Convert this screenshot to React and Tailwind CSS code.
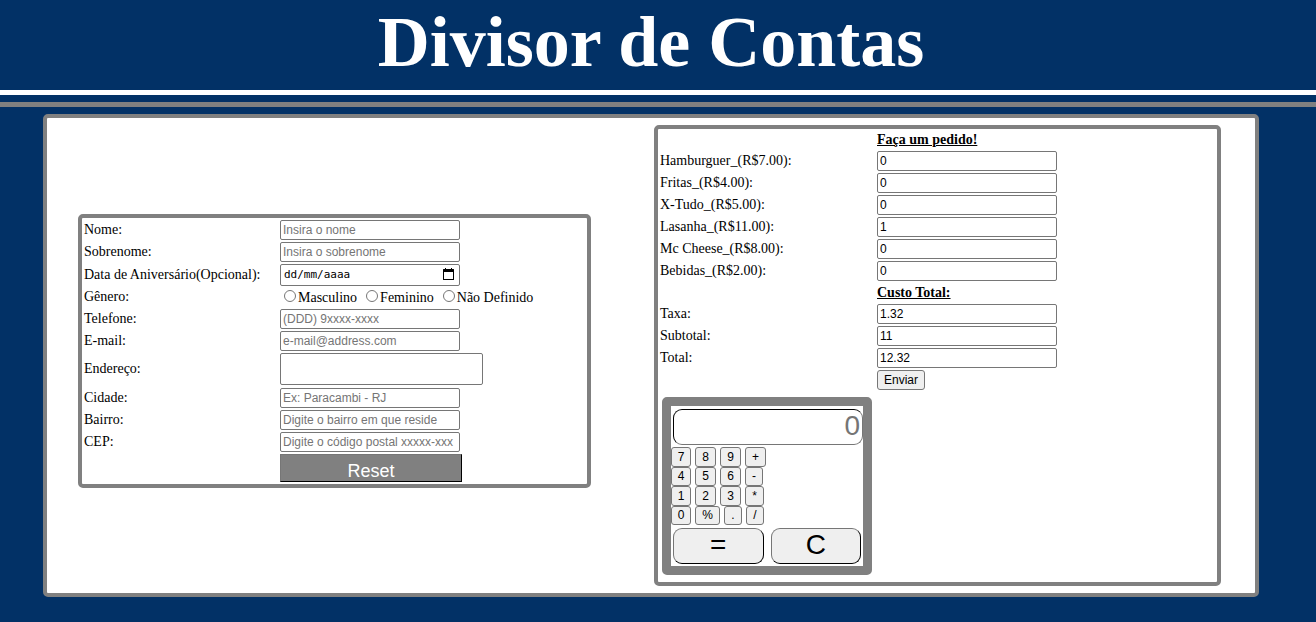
import { useState } from "react";

const FIELD =
  "h-5 w-[180px] rounded-[2px] border border-[#767676] bg-white px-[2px] font-['Liberation_Sans',Arial,sans-serif] text-[12px] leading-4 text-black placeholder:text-[#757575]";
const ROW = "grid grid-cols-[196px_1fr] items-center";
const ORDER_ROW = "grid grid-cols-[217px_1fr] items-center";
const KEY = "rounded-[3px] border border-[#767676] bg-[#efefef] text-center leading-none";
const BIG_KEY =
  "h-9 flex-1 rounded-[9px] border border-t-[#767676] border-l-[#767676] border-r-black border-b-black bg-[#efefef] pb-[3px] text-[28px] leading-none";

const MENU = [
  { id: "hamburguer", label: "Hamburguer_(R$7.00):", price: 7 },
  { id: "fritas", label: "Fritas_(R$4.00):", price: 4 },
  { id: "xtudo", label: "X-Tudo_(R$5.00):", price: 5 },
  { id: "lasanha", label: "Lasanha_(R$11.00):", price: 11 },
  { id: "mccheese", label: "Mc Cheese_(R$8.00):", price: 8 },
  { id: "bebidas", label: "Bebidas_(R$2.00):", price: 2 },
];

const KEYS = [
  [["7", "w-5"], ["8", "w-[21px]"], ["9", "w-[21px]"], ["+", "w-[21px]"]],
  [["4", "w-5"], ["5", "w-[21px]"], ["6", "w-[21px]"], ["-", "w-[18px]"]],
  [["1", "w-5"], ["2", "w-[21px]"], ["3", "w-[21px]"], ["*", "w-[19px]"]],
  [["0", "w-5"], ["%", "w-[25px]"], [".", "w-[18px]"], ["/", "w-[18px]"]],
];

const OPERATIONS = {
  "+": (a, b) => a + b,
  "-": (a, b) => a - b,
  "*": (a, b) => a * b,
  "/": (a, b) => a / b,
  "%": (a, b) => a % b,
};

function evaluate(expression) {
  const tokens = expression.match(/\d*\.?\d+|[-+*/%]/g) || [];
  let result = Number(tokens[0]);
  for (let i = 1; i + 1 < tokens.length; i += 2) {
    const operation = OPERATIONS[tokens[i]];
    if (!operation) return "";
    result = operation(result, Number(tokens[i + 1]));
  }
  return Number.isFinite(result) ? String(result) : "";
}

function TextRow({ id, label, type = "text", placeholder }) {
  return (
    <div className={ROW}>
      <label htmlFor={id}>{label}</label>
      <input id={id} type={type} placeholder={placeholder} className={FIELD} />
    </div>
  );
}

function CustomerForm() {
  return (
    <form className="mb-[10px] flex flex-col gap-[2px] rounded-[5px] border-4 border-[#808080] p-[2px]">
      <TextRow id="nome" label="Nome:" placeholder="Insira o nome" />
      <TextRow id="sobrenome" label="Sobrenome:" placeholder="Insira o sobrenome" />
      <div className={ROW}>
        <label htmlFor="aniversario">Data de Aniversário(Opcional):</label>
        <div className="flex h-[22px] w-[180px] items-center rounded-[2px] border border-[#767676] pr-1 pl-[3px]">
          <input
            id="aniversario"
            type="text"
            placeholder="dd/mm/aaaa"
            className="min-w-0 flex-1 bg-transparent font-['DejaVu_Sans_Mono',monospace] text-[11px] leading-4 outline-none placeholder:text-black"
          />
          <button type="button" aria-label="Abrir calendário">
            <svg width="13" height="13" viewBox="0 0 13 13" className="block">
              <path
                d="M1.5 1H3V0h1v1h5V0h1v1h1.5q.5 0 .5.5v10q0 .5-.5.5h-10q-.5 0-.5-.5v-10q0-.5.5-.5zM2 4v7h9V4z"
                fill="#000"
                fillRule="evenodd"
              />
            </svg>
          </button>
        </div>
      </div>
      <div className={ROW} role="radiogroup" aria-labelledby="genero">
        <span id="genero">Gênero:</span>
        <div className="flex h-[19px] items-center gap-[9px] pl-1">
          {["Masculino", "Feminino", "Não Definido"].map((option) => (
            <label key={option} className="flex items-center gap-[2px]">
              <input type="radio" name="genero" value={option} className="mb-[3px] size-3" />
              <span className="pt-[2px]">{option}</span>
            </label>
          ))}
        </div>
      </div>
      <TextRow id="telefone" label="Telefone:" type="tel" placeholder="(DDD) 9xxxx-xxxx" />
      <TextRow id="email" label="E-mail:" type="email" placeholder="e-mail@address.com" />
      <div className={ROW}>
        <label htmlFor="endereco">Endereço:</label>
        <textarea
          id="endereco"
          className="mb-px block h-8 w-[203px] resize-none rounded-[2px] border border-[#767676] p-[2px] font-['Liberation_Mono',monospace] text-[12px]"
        />
      </div>
      <TextRow id="cidade" label="Cidade:" placeholder="Ex: Paracambi - RJ" />
      <TextRow id="bairro" label="Bairro:" placeholder="Digite o bairro em que reside" />
      <TextRow id="cep" label="CEP:" placeholder="Digite o código postal xxxxx-xxx" />
      <div className="pl-[196px]">
        <button
          type="reset"
          className="block h-7 w-[182px] border border-t-[#767676] border-l-[#767676] border-r-black border-b-black bg-[#808080] pt-[6px] font-['Liberation_Sans',Arial,sans-serif] text-[18px] leading-none text-white"
        >
          Reset
        </button>
      </div>
    </form>
  );
}

function Calculator() {
  const [display, setDisplay] = useState("");
  return (
    <div className="m-1 mt-[5px] mb-[7px] w-[210px] rounded-[5px] border-[9px] border-[#808080] pb-[2px] font-['Liberation_Sans',Arial,sans-serif]">
      <input
        type="text"
        aria-label="Visor da calculadora"
        placeholder="0"
        readOnly
        value={display}
        className="mt-[3px] ml-[2px] block h-9 w-[190px] rounded-[9px] border border-t-black border-r-[#767676] border-b-[#767676] border-l-black px-[2px] pb-[3px] text-right text-[28px] leading-none placeholder:text-[#757575]"
      />
      <div className="mt-[2px] grid h-[78px] grid-rows-4 text-[12px]">
        {KEYS.map((row) => (
          <div key={row[0][0]} className="flex gap-1">
            {row.map(([symbol, width]) => (
              <button
                key={symbol}
                type="button"
                onClick={() => setDisplay(display + symbol)}
                className={`${KEY} ${width}`}
              >
                {symbol}
              </button>
            ))}
          </div>
        ))}
      </div>
      <div className="mt-[3px] flex gap-[7px] px-[2px]">
        <button type="button" className={BIG_KEY} onClick={() => setDisplay(evaluate(display))}>
          =
        </button>
        <button type="button" className={BIG_KEY} onClick={() => setDisplay("")}>
          C
        </button>
      </div>
    </div>
  );
}

function OrderPanel() {
  const [quantities, setQuantities] = useState({ lasanha: "1" });
  const subtotal = MENU.reduce(
    (sum, item) => sum + item.price * Number(quantities[item.id] ?? 0),
    0
  );
  const fee = Math.round(subtotal * 12) / 100;
  const totals = [
    { id: "taxa", label: "Taxa:", value: fee },
    { id: "subtotal", label: "Subtotal:", value: subtotal },
    { id: "total", label: "Total:", value: Math.round((subtotal + fee) * 100) / 100 },
  ];

  return (
    <section className="rounded-[5px] border-4 border-[#808080]">
      <form className="flex flex-col gap-[2px] p-[2px]" onSubmit={(e) => e.preventDefault()}>
        <h2 className="h-[18px] pl-[217px] leading-[18px] font-bold underline">Faça um pedido!</h2>
        {MENU.map((item) => (
          <div key={item.id} className={ORDER_ROW}>
            <label htmlFor={item.id}>{item.label}</label>
            <input
              id={item.id}
              type="text"
              inputMode="numeric"
              value={quantities[item.id] ?? "0"}
              onChange={(e) =>
                setQuantities({ ...quantities, [item.id]: e.target.value.replace(/\D/g, "") })
              }
              className={FIELD}
            />
          </div>
        ))}
        <h2 className="h-[19px] pl-[217px] leading-[19px] font-bold underline">Custo Total:</h2>
        {totals.map((total) => (
          <div key={total.id} className={ORDER_ROW}>
            <label htmlFor={total.id}>{total.label}</label>
            <input id={total.id} type="text" readOnly value={total.value} className={FIELD} />
          </div>
        ))}
        <div className="pl-[217px]">
          <button
            type="submit"
            className="block h-5 w-12 rounded-[3px] border border-[#767676] bg-[#efefef] font-['Liberation_Sans',Arial,sans-serif] text-[12px] leading-none"
          >
            Enviar
          </button>
        </div>
      </form>
      <Calculator />
    </section>
  );
}

export default function App() {
  return (
    <div className="min-h-screen bg-[#023166] pb-6 font-['Liberation_Serif','Times_New_Roman',serif] text-[14px] leading-4 text-black">
      <header>
        <h1 className="h-[90px] pr-[14px] text-center text-[72px] leading-[84px] font-bold text-white">
          Divisor de Contas
        </h1>
        <div className="h-[5px] bg-white" />
        <div className="mt-[7px] h-[5px] bg-[#808080]" />
      </header>
      <main className="mt-[7px] mr-[57px] ml-[43px] grid grid-cols-[513fr_567fr] items-center gap-[63px] rounded-[5px] border-4 border-[#808080] bg-white py-[7px] pr-[34px] pl-[31px]">
        <CustomerForm />
        <OrderPanel />
      </main>
    </div>
  );
}
